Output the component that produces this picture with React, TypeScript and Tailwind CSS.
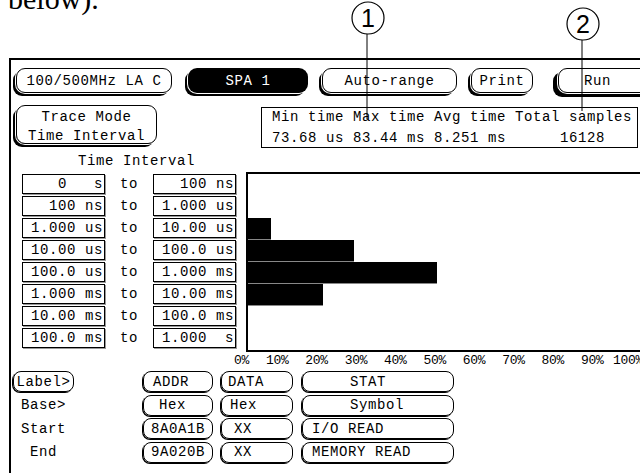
const rows = [
  { from: "0   s", to: "100 ns", pct: 0 },
  { from: "100 ns", to: "1.000 us", pct: 0 },
  { from: "1.000 us", to: "10.00 us", pct: 5.8 },
  { from: "10.00 us", to: "100.0 us", pct: 27 },
  { from: "100.0 us", to: "1.000 ms", pct: 48 },
  { from: "1.000 ms", to: "10.00 ms", pct: 19 },
  { from: "10.00 ms", to: "100.0 ms", pct: 0 },
  { from: "100.0 ms", to: "1.000  s", pct: 0 },
];

const ticks = ["10%", "20%", "30%", "40%", "50%", "60%", "70%", "80%", "90%", "100%"];

const btn =
  "h-[25px] shrink-0 flex items-center justify-center rounded-[9px] border border-black bg-white shadow-[0_0_0_1px_#fff,-3px_3px_0_0_#000]";
const pill = "h-[21px] flex items-center rounded-[8px] border border-black shadow-[-1px_1px_0_0_#000]";
const box =
  "h-[20px] w-[83px] shrink-0 flex items-center justify-end pr-[1px] border border-black shadow-[1px_1px_0_0_#999] whitespace-pre";

function Callout({ n, left, top, len }: { n: string; left: string; top: string; len: number }) {
  return (
    <svg className={`absolute ${left} ${top}`} width="36" height={34 + len} viewBox={`0 0 36 ${34 + len}`}>
      <circle cx="18" cy="17" r="16" fill="white" stroke="black" strokeWidth="1.2" />
      <text x="18" y="26" textAnchor="middle" fontSize="25" fontFamily="Liberation Sans, Arial, sans-serif">
        {n}
      </text>
      <line x1="17" y1="33" x2="17" y2={34 + len} stroke="black" strokeWidth="1" />
    </svg>
  );
}

export default function App() {
  return (
    <div className="relative w-[640px] h-[473px] overflow-hidden bg-white text-black">
      <div className="h-[58px] overflow-hidden">
        <p className="font-['Liberation_Serif',serif] text-[30px] leading-[30px] -mt-[16px] ml-[8px]">below).</p>
      </div>

      <div className="ml-[9px] h-[415px] border-t-2 border-l-2 border-black font-['Liberation_Mono',monospace] text-[14px] leading-none tracking-[0.6px]">
        {/* top buttons */}
        <div className="flex pt-[8px] pl-[5px]">
          <div className={`${btn} w-[156px]`}>100/500MHz LA C</div>
          <div className="ml-[16px] h-[25px] w-[120px] shrink-0 flex items-center justify-center rounded-[9px] bg-black text-white shadow-[0_0_0_1px_#fff,-3px_3px_0_0_#000]">
            SPA 1
          </div>
          <div className={`${btn} ml-[14px] w-[135px]`}>Auto-range</div>
          <div className={`${btn} ml-[14px] w-[62px]`}>Print</div>
          <div className="ml-[25px] h-[25px] w-[100px] shrink-0 flex items-center pl-[25px] rounded-[9px] border border-black bg-white shadow-[0_0_0_1px_#fff,-5px_4px_0_0_#000]">
            Run
          </div>
        </div>

        {/* trace mode + stats */}
        <div className="flex items-start mt-[12px] pl-[5px]">
          <div className="h-[39px] w-[141px] shrink-0 flex flex-col items-center pt-[4px] gap-[5px] rounded-[9px] border border-black shadow-[0_0_0_1px_#fff,-3px_3px_0_0_#000]">
            <span>Trace Mode</span>
            <span>Time Interval</span>
          </div>
          <div className="ml-[104px] mt-[2px] h-[41px] w-[377px] shrink-0 border border-black pl-[10px] flex flex-col justify-center gap-[7px] whitespace-pre">
            <span>Min time Max time Avg time Total samples</span>
            <span>73.68 us 83.44 ms 8.251 ms      16128</span>
          </div>
        </div>

        <p className="mt-[1px] ml-[67px] h-[23px] flex items-center">Time Interval</p>

        {/* interval table + histogram */}
        <div className="flex items-start">
          <div className="mt-[2px] ml-[11px] flex flex-col gap-[2px]">
            {rows.map((r) => (
              <div key={r.from} className="flex items-center">
                <div className={box}>{r.from}</div>
                <span className="w-[48px] shrink-0 text-center">to</span>
                <div className={box}>{r.to}</div>
              </div>
            ))}
          </div>
          <div className="ml-[10px] w-[410px] shrink-0 border-2 border-black">
            {rows.map((r) => (
              <div key={r.from} className="h-[22px] w-[394px]">
                {r.pct > 0 && <div className="h-[22px] bg-black border-b border-[#888]" style={{ width: `${r.pct}%` }} />}
              </div>
            ))}
          </div>
        </div>

        {/* axis */}
        <div className="flex mt-[1px] ml-[219px] h-[14px] items-center text-[13px] tracking-[-0.3px] whitespace-nowrap">
          <span className="w-[19px] text-right shrink-0">0%</span>
          {ticks.map((t) => (
            <span key={t} className="w-[39.4px] text-right shrink-0">
              {t}
            </span>
          ))}
        </div>

        {/* label / base / start / end */}
        <div className="mt-[4px] ml-[2px] grid grid-cols-[61px_69px_70px_8px_72px_9px_152px] auto-rows-[21px] gap-y-[2.5px]">
          <div className={`${pill} justify-center`}>Label&gt;</div>
          <div />
          <div className={`${pill} pl-[9px]`}>ADDR</div>
          <div />
          <div className={`${pill} pl-[6px]`}>DATA</div>
          <div />
          <div className={`${pill} pl-[47px]`}>STAT</div>

          <div className="flex items-center justify-center">Base&gt;</div>
          <div />
          <div className={`${pill} pl-[15px]`}>Hex</div>
          <div />
          <div className={`${pill} pl-[8px]`}>Hex</div>
          <div />
          <div className={`${pill} pl-[47px]`}>Symbol</div>

          <div className="flex items-center justify-center">Start</div>
          <div />
          <div className={`${pill} pl-[7px]`}>8A0A1B</div>
          <div />
          <div className={`${pill} pl-[12px]`}>XX</div>
          <div />
          <div className={`${pill} pl-[9px]`}>I/O READ</div>

          <div className="flex items-center justify-center">End</div>
          <div />
          <div className={`${pill} pl-[7px]`}>9A020B</div>
          <div />
          <div className={`${pill} pl-[12px]`}>XX</div>
          <div />
          <div className={`${pill} pl-[9px]`}>MEMORY READ</div>
        </div>
      </div>

      <Callout n="1" left="left-[350px]" top="top-[1px]" len={84} />
      <Callout n="2" left="left-[565px]" top="top-[7px]" len={70} />
    </div>
  );
}
